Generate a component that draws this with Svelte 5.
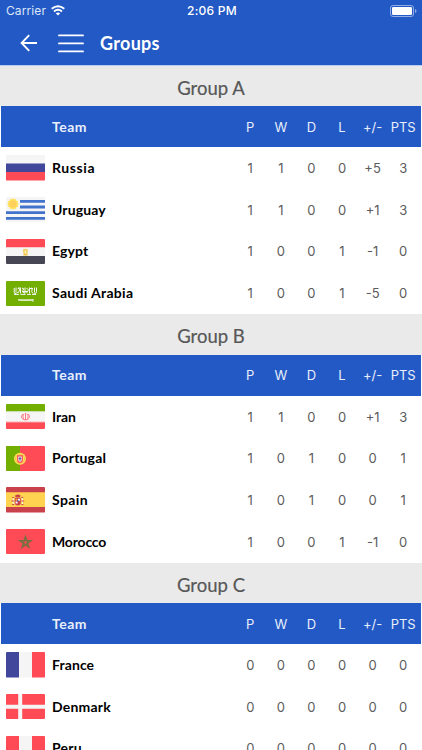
<script>
  const groups = [
    { name: 'Group A', teams: [
      { id: 'ru', name: 'Russia', spacing: 0.6, stats: ['1', '1', '0', '0', '+5', '3'] },
      { id: 'uy', name: 'Uruguay', spacing: 0.15, stats: ['1', '1', '0', '0', '+1', '3'] },
      { id: 'eg', name: 'Egypt', spacing: 0.1, stats: ['1', '0', '0', '1', '-1', '0'] },
      { id: 'sa', name: 'Saudi Arabia', spacing: 0.32, stats: ['1', '0', '0', '1', '-5', '0'] }
    ] },
    { name: 'Group B', teams: [
      { id: 'ir', name: 'Iran', spacing: -0.1, stats: ['1', '1', '0', '0', '+1', '3'] },
      { id: 'pt', name: 'Portugal', spacing: 0.18, stats: ['1', '0', '1', '0', '0', '1'] },
      { id: 'es', name: 'Spain', spacing: 0.4, stats: ['1', '0', '1', '0', '0', '1'] },
      { id: 'ma', name: 'Morocco', spacing: -0.18, stats: ['1', '0', '0', '1', '-1', '0'] }
    ] },
    { name: 'Group C', teams: [
      { id: 'fr', name: 'France', spacing: 0.1, stats: ['0', '0', '0', '0', '0', '0'] },
      { id: 'dk', name: 'Denmark', spacing: 0.2, stats: ['0', '0', '0', '0', '0', '0'] },
      { id: 'pe', name: 'Peru', spacing: 0.2, stats: ['0', '0', '0', '0', '0', '0'] }
    ] }
  ];
  const columns = ['P', 'W', 'D', 'L', '+/-', 'PTS'];
</script>

{#snippet flag(id)}
  <svg class="flag" viewBox="0 0 39 25.4" preserveAspectRatio="none">
    {#if id === 'ru'}
      <path fill="#f5f5f5" d="M0 0h39v9H0z" /><path fill="#41479b" d="M0 8.5h39v8.4H0z" /><path fill="#ff4b55" d="M0 16.9h39v8.5H0z" />
    {:else if id === 'uy'}
      <path fill="#f5f5f5" d="M0 0h39v25.4H0z" />
      <path fill="#4173cd" d="M14 2.9h25v2.9H14zM14 8.6h25v2.9H14zM0 14.2h39v2.9H0zM0 19.9h39v2.9H0z" />
      <path fill="#ffe15a" d="M7 2l1.2 1.6L10 2.8l.2 2 2 .2-.8 1.8L13 8l-1.6 1.2.8 1.8-2 .2-.2 2-1.8-.8L7 14l-1.2-1.6-1.8.8-.2-2-2-.2.8-1.8L1 8l1.6-1.2L1.8 5l2-.2.2-2 1.8.8z" transform="translate(0 -1)" />
      <circle cx="7" cy="7" r="3.5" fill="#ffd15a" />
    {:else if id === 'eg'}
      <path fill="#ff4b55" d="M0 0h39v8.5H0z" /><path fill="#f5f5f5" d="M0 8.5h39v8.5H0z" /><path fill="#464655" d="M0 17h39v8.4H0z" />
      <path d="M17.7 10.8l.5 4.6h2.6l.5-4.6-1.1.5-.7-1.4-.7 1.4zM17.3 16h4.4" fill="#fff0b0" stroke="#f2bd35" stroke-width="1" />
    {:else if id === 'sa'}
      <path fill="#73af00" d="M0 0h39v25.4H0z" />
      <g fill="none" stroke="#f5f5f5" stroke-width="1">
        <path d="M8.2 7v4q0 2 2 1.5M10 6.5v4.8M11.5 8q2-2 2 1t-3 3M14.5 6.5v6M16 7.2q3 0 1 2t2 3M19 6.5v6M20.5 7l2 2-2 3M23.5 6.5v6M25 7q2 0 1 2t1 3.5M28.5 6.5v5M30.5 6.5v4q0 3-3 2.5M8 13.4h5m1.5 0h5m1.5 0h4m1 0h4M12 7h2m3 3.5h4m2-3h4" />
        <path stroke-width=".85" d="M12 18.8h16M12 18.8q2 1.1 13.5.5M26 18.2v1.8h1.8" />
      </g>
    {:else if id === 'ir'}
      <path fill="#f5f5f5" d="M0 0h39v25.4H0z" /><path fill="#73af00" d="M0 0h39v7.2H0z" /><path fill="#ff4b55" d="M0 18.2h39v7.2H0z" />
      <path fill="none" stroke="#c6dda0" stroke-width=".8" stroke-dasharray="1 .6" d="M0 7.6h39" /><path fill="none" stroke="#ff9ba0" stroke-width=".8" stroke-dasharray="1 .6" d="M0 17.8h39" />
      <path fill="none" stroke="#ff5b64" stroke-width=".8" d="M19.5 9v7.3M18.2 9.7c-1.9 2-1.4 4.7.5 6.1M20.8 9.7c1.9 2 1.4 4.7-.5 6.1M16.8 10c-2.3 3-1.3 5 1.8 5.8M22.2 10c2.3 3 1.3 5-1.8 5.8" />
    {:else if id === 'pt'}
      <path fill="#ff4b55" d="M0 0h39v25.4H0z" /><path fill="#73af00" d="M0 0h14v25.4H0z" />
      <circle cx="14" cy="12.7" r="6" fill="#ffe15a" /><circle cx="14" cy="12.7" r="4.6" fill="none" stroke="#e9b843" stroke-width=".7" />
      <path d="M11.1 9.3h5.8v4.8a2.9 2.9 0 0 1-5.8 0z" fill="#ff4b55" /><path d="M12.3 10.5h3.4v3.6a1.7 1.7 0 0 1-3.4 0z" fill="#f5f5f5" />
      <path d="M14 10.8v4M12.7 12.7h2.6" stroke="#41479b" stroke-width=".9" />
    {:else if id === 'es'}
      <path fill="#c8414b" d="M0 0h39v25.4H0z" /><path fill="#ffd250" d="M0 5.3h39v14.8H0z" />
      <path fill="#c8414b" d="M8.8 11h6v4.5a3 3 0 0 1-6 0zM9 8.7q3-2.4 5.6 0l-.7 1.7H9.7z" />
      <path fill="#f5f5f5" d="M12 11.7h2v2h-2zM9.6 14.4h2v2h-2zM6.8 11h1v6h-1zM15.8 11h1v6h-1z" /><path fill="#ffb441" d="M9.6 11.8h1.8v1.8H9.6z" />
      <path stroke="#c8414b" stroke-width=".9" d="M6.2 10.5h2M15.3 10.5h2M5.4 14h3M15.2 14h3M6 17.6h2.2M15.3 17.6h2.2" /><circle cx="11.8" cy="13.9" r=".8" fill="#5064aa" />
    {:else if id === 'ma'}
      <path fill="#ff4b55" d="M0 0h39v25.4H0z" />
      <path fill="none" stroke="#73703f" stroke-width="1.4" d="M19.5 7.6l3.4 10.6-9-6.6h11.2l-9 6.6z" />
    {:else if id === 'fr'}
      <path fill="#41479b" d="M0 0h13v25.4H0z" /><path fill="#f5f5f5" d="M13 0h13v25.4H13z" /><path fill="#ff4b55" d="M26 0h13v25.4H26z" />
    {:else if id === 'dk'}
      <path fill="#ff4b55" d="M0 0h39v25.4H0z" /><path fill="#f5f5f5" d="M12.2 0h4v25.4h-4zM0 10.7h39v4H0z" />
    {:else}
      <path fill="#ff4b55" d="M0 0h39v25.4H0z" /><path fill="#f5f5f5" d="M13 0h13v25.4H13z" />
    {/if}
  </svg>
{/snippet}

<div class="screen">
  <header>
    <div class="status">
      <div class="carrier">
        <span>Carrier</span>
        <svg width="14" height="11" viewBox="0 0 14 11" fill="none" stroke="#fff" stroke-width="1.9">
          <path d="M.7 3.8q6.3-5.3 12.6 0M3 6.5q4-3.3 8 0" /><path d="M4.8 8.3q2.2-1.7 4.4 0L7 10.6z" fill="#fff" stroke="none" />
        </svg>
      </div>
      <span class="clock">2:06 PM</span>
      <svg class="battery" width="27" height="12" viewBox="0 0 27 12">
        <rect x=".5" y=".5" width="23" height="11" rx="2.5" fill="none" stroke="#94aee4" />
        <rect x="2" y="2" width="20" height="8" rx="1.2" fill="#fff" /><path d="M25 4q1.5.6 1.5 2T25 8z" fill="#94aee4" />
      </svg>
    </div>
    <div class="nav">
      <svg class="back" width="18" height="18" viewBox="0 0 18 18" fill="none" stroke="#fff" stroke-width="1.9"><path d="M9.2 1.2L1.6 9l7.6 7.8M1.6 9H17" /></svg>
      <svg class="menu" width="26" height="19" viewBox="0 0 26 19" stroke="#fff" stroke-width="1.9" stroke-linecap="round"><path d="M1 1.4h24M1 9.4h24M1 17.4h24" /></svg>
      <h1>Groups</h1>
    </div>
  </header>

  {#each groups as group}
    <section>
      <h2>{group.name}</h2>
      <div class="head">
        <span class="team">Team</span>
        {#each columns as column}<span class="cell">{column}</span>{/each}
      </div>
      {#each group.teams as team}
        <div class="row">
          {@render flag(team.id)}
          <span class="team" style:letter-spacing="{team.spacing}px">{team.name}</span>
          {#each team.stats as value}<span class="cell">{value}</span>{/each}
        </div>
      {/each}
    </section>
  {/each}
</div>

<style>
  :global(body) { margin: 0; background: #fff; }
  .screen { width: 422px; height: 750px; overflow: hidden; background: #fff; font-family: Inter, "Liberation Sans", sans-serif; }
  header { height: 65.6px; background: #2359c4; color: #fff; border-bottom: 1px solid #b9cbef; box-sizing: border-box; }
  .status { height: 21px; padding: 0 5px 0 6px; display: grid; grid-template-columns: 1fr auto 1fr; align-items: center; font-size: 12px; }
  .carrier { display: flex; align-items: center; gap: 5px; letter-spacing: .1px; color: #dce6fa; }
  .clock { font-weight: 500; letter-spacing: .25px; padding-left: 1px; }
  .battery { justify-self: end; }
  .nav { height: 44px; display: flex; align-items: center; padding-left: 20px; }
  .menu { margin-left: 20px; }
  h1 { margin: 0 0 0 16px; font: 700 18px/44px Lato, sans-serif; letter-spacing: .3px; }
  section { height: 248.5px; }
  h2 { margin: 0; height: 40.6px; background: #eaeaea; color: #575757; text-align: center; font: 400 18.5px/45px Lato, sans-serif; letter-spacing: 0; -webkit-text-stroke: .2px #575757; overflow: hidden; }
  .head { height: 41px; margin: 0 1px; padding: 0 2.5px 0 51px; background: #2359c4; color: #e8effc; display: flex; align-items: center; }
  .row { height: 41.72px; padding: 0 3.5px 0 6px; display: flex; align-items: center; color: #5c5c5c; }
  .flag { width: 39px; height: 25.4px; flex: none; margin-right: 7px; border-radius: 1px; }
  .team { flex: 1; font: 700 14px/20px Lato, sans-serif; letter-spacing: .1px; white-space: nowrap; }
  .head .team { letter-spacing: .5px; }
  .row .team { color: #000; }
  .cell { width: 30.6px; flex: none; display: flex; justify-content: center; font-size: 13px; }
</style>
